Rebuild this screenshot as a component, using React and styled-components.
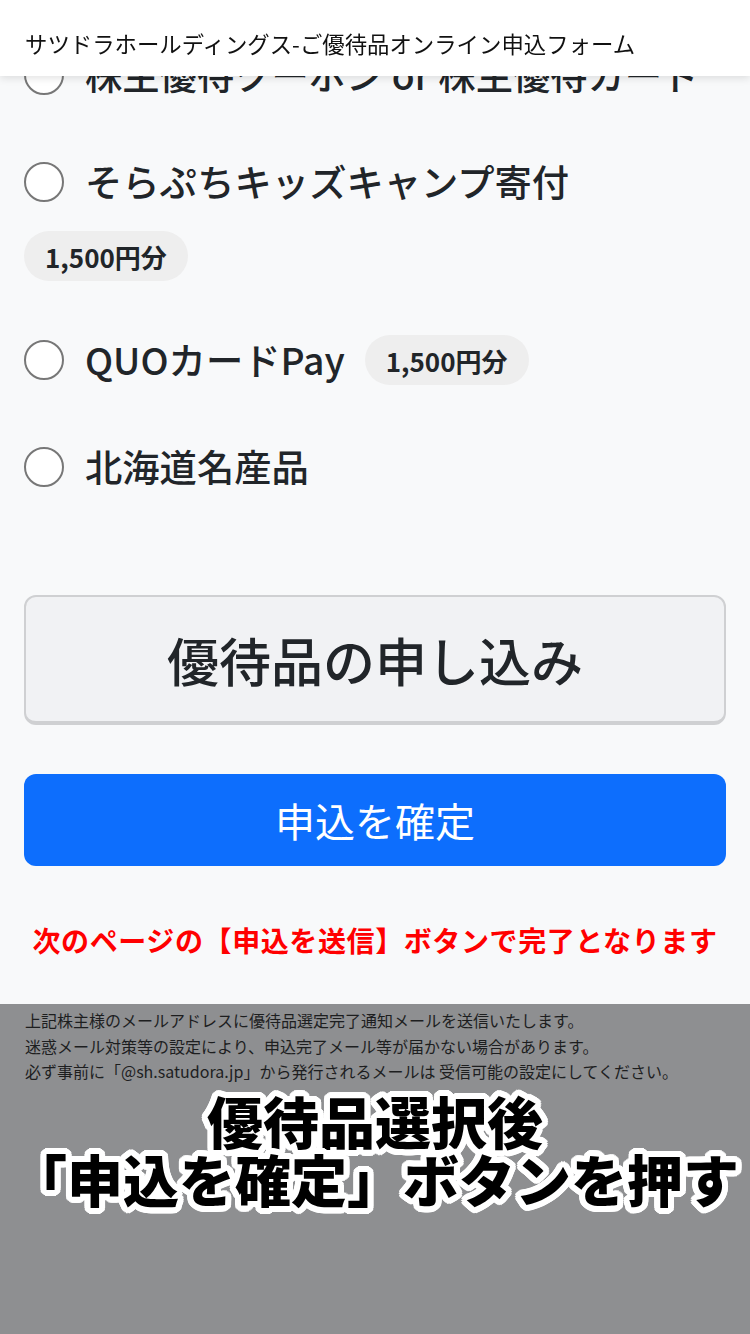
import React from 'react';
import styled, { createGlobalStyle } from 'styled-components';

const GlobalStyle = createGlobalStyle`
    html, body {
        margin: 0;
        padding: 0;
        background: #f8f9fa;
    }
    body {
        font-family: "Noto Sans CJK JP", "Noto Sans", sans-serif;
        color: #212529;
    }
    * {
        box-sizing: border-box;
    }
`

// white outline round the caption letters
const outline = (() => {
    const parts = [];
    [6, 4, 2].forEach(r => {
        for (let a = 0; a < 360; a += 15) {
            const rad = a * Math.PI / 180;
            parts.push(`${(Math.cos(rad) * r).toFixed(1)}px ${(Math.sin(rad) * r).toFixed(1)}px 0 #fff`);
        }
    });
    return parts.join(', ');
})();

const Page = styled.div`
    min-height: 1334px;
    display: flex;
    flex-direction: column;
`

const Header = styled.header`
    position: fixed;
    top: 0;
    left: 0;
    right: 0;
    z-index: 10;
    height: 76px;
    padding: 10px 25px 0;
    display: flex;
    align-items: center;
    background: #fff;
    box-shadow: 0 2px 8px rgba(0, 0, 0, 0.12);
    font-size: 22.4px;
    color: #111;
`

const Main = styled.main`
    padding: 51px 24px 0;
`

const OptionList = styled.div`
    display: flex;
    flex-direction: column;
    gap: 59px;
`

const Option = styled.div`
    display: flex;
    flex-direction: column;
`

const Row = styled.label`
    display: flex;
    align-items: center;
    height: 48px;
    gap: 21px;
`

const Radio = styled.span`
    width: 40px;
    height: 40px;
    flex-shrink: 0;
    border-radius: 50%;
    border: 2px solid #777;
    background: #fff;
`

const Label = styled.span`
    font-size: 37.3px;
    font-weight: 500;
    line-height: 1;
    white-space: nowrap;
`

const Badge = styled.span`
    display: inline-flex;
    align-items: center;
    height: 50px;
    padding: 0 21px;
    margin-left: ${p => p.$inline ? '-1px' : '0'};
    border-radius: 25px;
    background: #eeeeee;
    font-size: 26px;
    font-weight: 700;
`

const BadgeLine = styled.div`
    margin: 25px 0 -4px;
`

const ApplyCard = styled.div`
    margin-top: 104px;
    height: 130px;
    display: flex;
    align-items: center;
    justify-content: center;
    background: #f1f2f4;
    border: 2px solid #cfd0d2;
    border-bottom-width: 4px;
    border-radius: 12px;
    font-size: 52px;
    font-weight: 500;
`

const ConfirmButton = styled.button`
    display: block;
    width: 100%;
    height: 92px;
    margin-top: 49px;
    border: none;
    border-radius: 12px;
    background: #0d6efd;
    color: #fff;
    font-family: inherit;
    font-size: 40px;
`

const Notice = styled.p`
    margin: 54px -10px 0;
    line-height: 40px;
    text-align: center;
    color: #ff0000;
    font-size: 28px;
    font-weight: 700;
    letter-spacing: 0.6px;
    white-space: nowrap;
`

const Footer = styled.footer`
    flex: 1;
    margin-top: 44px;
    padding: 4px 25px 0;
    background: #8e8f91;
`

const MailNote = styled.p`
    margin: 0;
    font-size: 16px;
    line-height: 25.5px;
    color: #1d1e1f;
    white-space: nowrap;
`

const Caption = styled.div`
    margin: 6px -25px 0;
    text-align: center;
    font-size: 56px;
    font-weight: 900;
    line-height: 58px;
    color: #000;
    text-shadow: ${outline};
    white-space: nowrap;
`

const options = [
    { name: '株主優待クーポン or 株主優待カード' },
    { name: 'そらぷちキッズキャンプ寄付', badge: '1,500円分', badgeBelow: true },
    { name: 'QUOカードPay', badge: '1,500円分' },
    { name: '北海道名産品' },
];

export default function App() {
    return (
        <Page>
            <GlobalStyle />
            <Header>サツドラホールディングス-ご優待品オンライン申込フォーム</Header>
            <Main>
                <OptionList>
                    {options.map(o => (
                        <Option key={o.name}>
                            <Row>
                                <Radio />
                                <Label>{o.name}</Label>
                                {o.badge && !o.badgeBelow && <Badge $inline>{o.badge}</Badge>}
                            </Row>
                            {o.badgeBelow && (
                                <BadgeLine>
                                    <Badge>{o.badge}</Badge>
                                </BadgeLine>
                            )}
                        </Option>
                    ))}
                </OptionList>
                <ApplyCard>優待品の申し込み</ApplyCard>
                <ConfirmButton>申込を確定</ConfirmButton>
                <Notice>次のページの【申込を送信】ボタンで完了となります</Notice>
            </Main>
            <Footer>
                <MailNote>上記株主様のメールアドレスに優待品選定完了通知メールを送信いたします。</MailNote>
                <MailNote>迷惑メール対策等の設定により、申込完了メール等が届かない場合があります。</MailNote>
                <MailNote>必ず事前に「@sh.satudora.jp」から発行されるメールは 受信可能の設定にしてください。</MailNote>
                <Caption>
                    優待品選択後<br />
                    「申込を確定」ボタンを押す
                </Caption>
            </Footer>
        </Page>
    )
}
